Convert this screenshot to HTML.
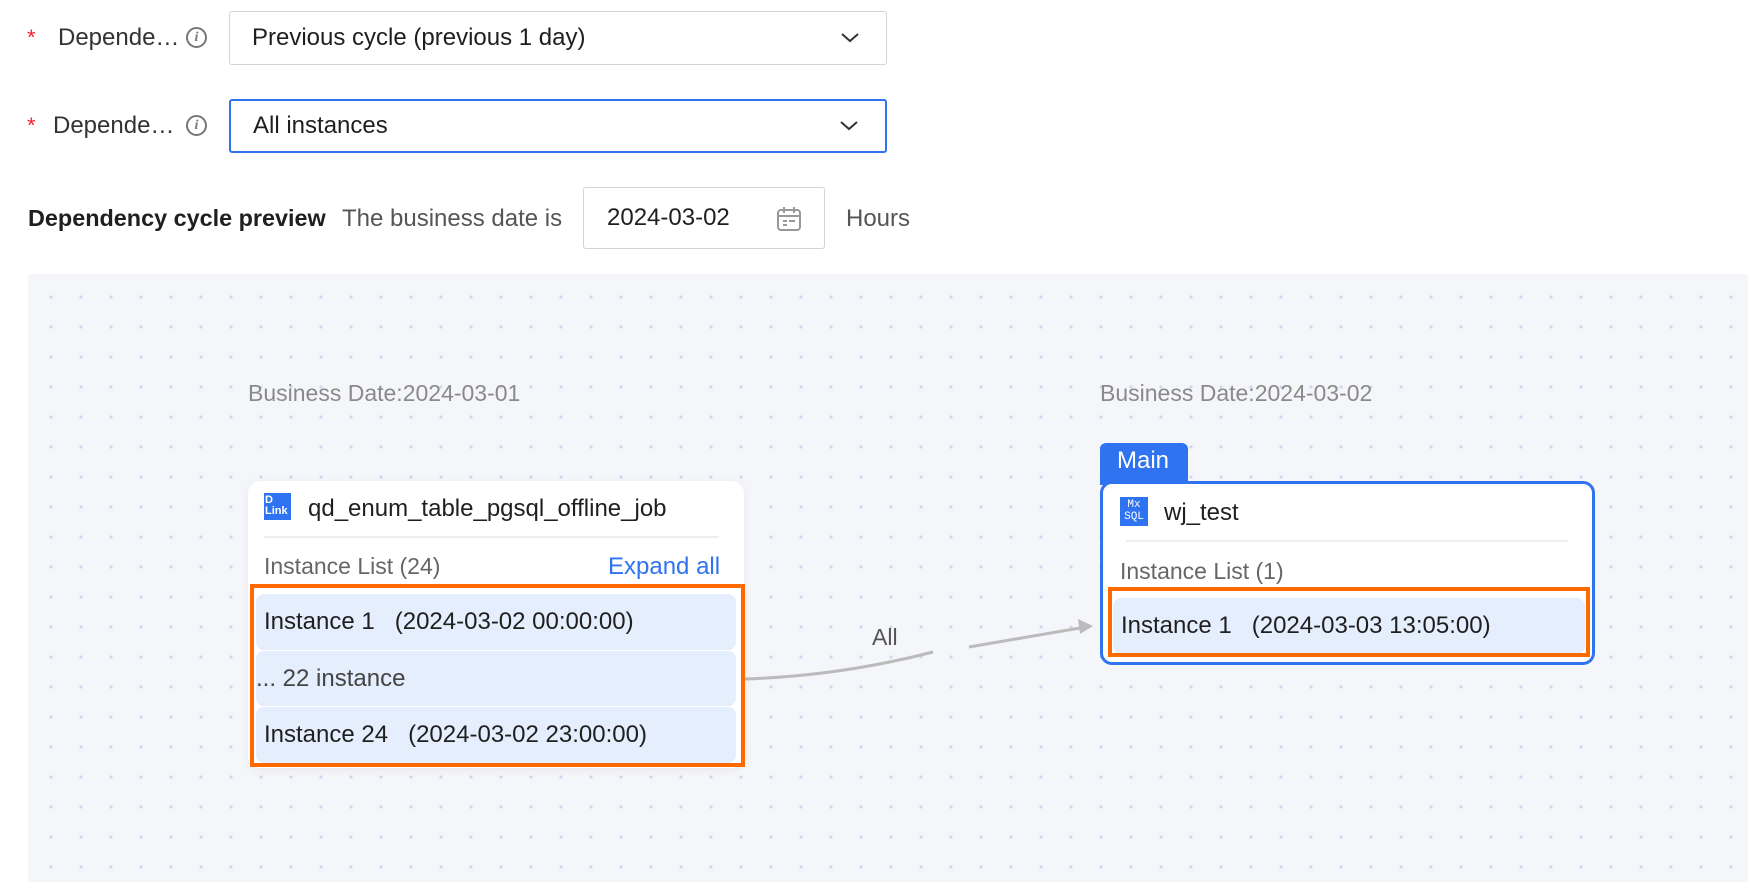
<!DOCTYPE html>
<html><head><meta charset="utf-8"><style>
*{box-sizing:border-box;margin:0;padding:0}
body{width:1762px;height:882px;background:#fff;font-family:"Liberation Sans",sans-serif;color:#1f1f1f;position:relative;overflow:hidden}
.abs{position:absolute}
.lbl{font-size:24px;color:#333;line-height:26px}
.star{color:#f5222d;font-size:22px}
.info{width:21px;height:21px;border:2px solid #777;border-radius:50%;font-size:14px;color:#777;text-align:center;line-height:17px;font-style:italic;font-family:"Liberation Serif",serif;font-weight:bold}
.sel{border:1.5px solid #d4d4d4;border-radius:3px;font-size:24px;padding-left:22px;display:flex;align-items:center;background:#fff}
.chev{position:absolute;right:26px;top:50%;margin-top:-9px}
.canvas{left:28px;top:274px;width:1720px;height:608px;background-color:#f5f6fa;background-image:radial-gradient(circle,#d3d6f0 1.4px,transparent 1.8px);background-size:30px 30px;background-position:8px 8px;border-radius:4px}
.bd{font-size:23px;color:#8a8a8a}
.card{background:#fff;border-radius:12px;box-shadow:0 2px 10px rgba(0,0,0,.06)}
.title{font-size:24px;color:#1f1f1f}
.sub{font-size:23px;color:#666}
.row{position:absolute;background:#e5eefd;border-radius:8px;font-size:24px;color:#1f1f1f;display:flex;align-items:center;padding-left:8px}
.orange{border:4px solid #ff6a00}
</style></head><body>

<div class="abs star" style="left:27px;top:25px">*</div>
<div class="abs lbl" style="left:58px;top:25px">Depende…</div>
<div class="abs info" style="left:186px;top:27px">i</div>
<div class="abs sel" style="left:229px;top:11px;width:658px;height:54px">Previous cycle (previous 1 day)
<svg class="chev" width="20" height="18" viewBox="0 0 20 18"><path d="M2 5 L10 12 L18 5" fill="none" stroke="#333" stroke-width="2"/></svg></div>

<div class="abs star" style="left:27px;top:113px">*</div>
<div class="abs lbl" style="left:53px;top:113px">Depende…</div>
<div class="abs info" style="left:186px;top:115px">i</div>
<div class="abs sel" style="left:229px;top:99px;width:658px;height:54px;border:2px solid #2f73f0">All instances
<svg class="chev" width="20" height="18" viewBox="0 0 20 18"><path d="M2 5 L10 12 L18 5" fill="none" stroke="#333" stroke-width="2"/></svg></div>

<div class="abs" style="left:28px;top:205px;font-size:23.4px;font-weight:bold;color:#1f1f1f">Dependency cycle preview</div>
<div class="abs" style="left:342px;top:205px;font-size:24px;color:#555">The business date is</div>
<div class="abs sel" style="left:583px;top:187px;width:242px;height:62px;padding-left:23px">2024-03-02
<svg class="abs" style="left:192px;top:18px" width="26" height="26" viewBox="0 0 26 26"><rect x="2" y="4" width="22" height="20" rx="3" fill="none" stroke="#999" stroke-width="2"/><path d="M2 10H24M8 1V7M18 1V7M7 15H11M13 15H19M7 19H11" stroke="#999" stroke-width="2"/></svg></div>
<div class="abs" style="left:846px;top:205px;font-size:24px;color:#555">Hours</div>

<div class="abs canvas"></div>

<div class="abs bd" style="left:248px;top:380px">Business Date:2024-03-01</div>
<div class="abs bd" style="left:1100px;top:380px">Business Date:2024-03-02</div>

<svg class="abs" style="left:0;top:0" width="1762" height="882">
<path d="M744 679 Q840 676 933 652" fill="none" stroke="#bbb" stroke-width="3"/>
<path d="M969 647 L1080 628" fill="none" stroke="#bbb" stroke-width="3"/>
<path d="M1093 626 L1078 619 L1080 634 Z" fill="#bbb"/>
</svg>
<div class="abs" style="left:872px;top:624px;font-size:23px;color:#555">All</div>

<!-- left card -->
<div class="abs card" style="left:248px;top:481px;width:496px;height:287px"></div>
<div class="abs" style="left:264px;top:493px;width:27px;height:27px;background:#2f73f0;color:#fff;font-size:11px;line-height:11px;padding:2px 1px;font-weight:bold">D<br>Link</div>
<div class="abs title" style="left:308px;top:495px">qd_enum_table_pgsql_offline_job</div>
<div class="abs" style="left:264px;top:536px;width:455px;height:2px;background:#eee"></div>
<div class="abs sub" style="left:264px;top:553px">Instance List (24)</div>
<div class="abs" style="left:608px;top:553px;width:112px;text-align:right;font-size:24px;color:#2f73f0;white-space:nowrap">Expand all</div>
<div class="row" style="left:256px;top:594px;width:480px;height:56px">Instance 1&nbsp;&nbsp;&nbsp;(2024-03-02 00:00:00)</div>
<div class="row" style="left:256px;top:651px;width:480px;height:55px;padding-left:0;color:#444">... 22 instance</div>
<div class="row" style="left:256px;top:707px;width:480px;height:56px">Instance 24&nbsp;&nbsp;&nbsp;(2024-03-02 23:00:00)</div>
<div class="abs orange" style="left:250px;top:584px;width:495px;height:183px"></div>

<!-- right card -->
<div class="abs" style="left:1100px;top:443px;width:88px;height:42px;background:#2f73f0;border-radius:6px 6px 0 0;color:#fff;font-size:24px;padding:4px 0 0 17px">Main</div>
<div class="abs card" style="left:1100px;top:481px;width:495px;height:184px;border:3px solid #2f73f0;box-shadow:none"></div>
<div class="abs" style="left:1120px;top:497px;width:28px;height:29px;background:#2f73f0;color:#fff;font-size:11px;line-height:12px;text-align:center;font-family:'Liberation Mono',monospace;padding-top:2px">Mx<br>SQL</div>
<div class="abs title" style="left:1164px;top:499px">wj_test</div>
<div class="abs" style="left:1126px;top:540px;width:442px;height:2px;background:#eee"></div>
<div class="abs sub" style="left:1120px;top:558px">Instance List (1)</div>
<div class="row" style="left:1113px;top:598px;width:472px;height:56px">Instance 1&nbsp;&nbsp;&nbsp;(2024-03-03 13:05:00)</div>
<div class="abs orange" style="left:1108px;top:587px;width:482px;height:70px"></div>

</body></html>
